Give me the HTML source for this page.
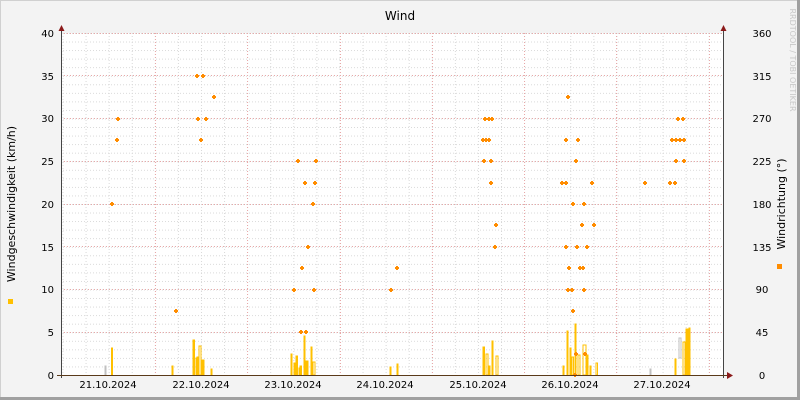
<!DOCTYPE html>
<html><head><meta charset="utf-8"><style>
html,body{margin:0;padding:0;width:800px;height:400px;overflow:hidden;background:#f3f3f3}
svg text{font-family:"DejaVu Sans","Liberation Sans",sans-serif}
</style></head><body>
<svg width="800" height="400" xmlns="http://www.w3.org/2000/svg">
<defs>
<pattern id="mh" x="0" y="33" width="800" height="8.55" patternUnits="userSpaceOnUse"><line x1="0" y1="0.5" x2="800" y2="0.5" stroke="#d8d8d8" stroke-dasharray="1,2"/></pattern>
<pattern id="mv" x="62.5" y="0" width="23.08" height="400" patternUnits="userSpaceOnUse"><line x1="0.5" y1="0" x2="0.5" y2="400" stroke="#d8d8d8" stroke-dasharray="1,2"/></pattern>
</defs>
<rect x="0" y="0" width="800" height="400" fill="#f3f3f3"/>
<line x1="0" y1="0.5" x2="800" y2="0.5" stroke="#d0d0d0"/>
<line x1="0.5" y1="0" x2="0.5" y2="400" stroke="#d0d0d0"/>
<line x1="0" y1="398.5" x2="800" y2="398.5" stroke="#a0a0a0" stroke-width="3"/>
<line x1="798.5" y1="0" x2="798.5" y2="400" stroke="#a0a0a0" stroke-width="3"/>
<rect x="61" y="33" width="662" height="342" fill="#fff"/>
<rect x="61" y="33" width="662" height="342" fill="url(#mh)"/>
<rect x="61" y="33" width="662" height="342" fill="url(#mv)"/>
<g stroke="#e8a8a8" stroke-dasharray="1,2">
<line x1="61" y1="332.5" x2="723" y2="332.5"/><line x1="61" y1="289.5" x2="723" y2="289.5"/><line x1="61" y1="246.5" x2="723" y2="246.5"/><line x1="61" y1="204.5" x2="723" y2="204.5"/><line x1="61" y1="161.5" x2="723" y2="161.5"/><line x1="61" y1="118.5" x2="723" y2="118.5"/><line x1="61" y1="75.5" x2="723" y2="75.5"/><line x1="61" y1="33.5" x2="723" y2="33.5"/>
<line x1="155.5" y1="33" x2="155.5" y2="378"/><line x1="247.5" y1="33" x2="247.5" y2="378"/><line x1="340.5" y1="33" x2="340.5" y2="378"/><line x1="432.5" y1="33" x2="432.5" y2="378"/><line x1="524.5" y1="33" x2="524.5" y2="378"/><line x1="616.5" y1="33" x2="616.5" y2="378"/><line x1="709.5" y1="33" x2="709.5" y2="378"/>
</g>
<g fill="#ffc000" stroke="#ffc000">
<rect x="105" y="366" width="1" height="9" fill="none" stroke="#c0c0c0"/><rect x="111.5" y="348" width="1" height="27"/>
<rect x="172" y="366" width="1" height="9"/>
<rect x="193" y="340" width="1.5" height="35"/><rect x="196" y="358" width="1" height="17" fill="none"/><rect x="197" y="357" width="2" height="18"/><rect x="199" y="346" width="2" height="29" fill="none"/><rect x="202" y="360" width="2" height="15"/><rect x="211" y="369" width="1" height="6"/>
<rect x="291" y="354" width="1" height="21"/><rect x="294" y="363" width="1" height="12"/><rect x="296" y="356" width="1.5" height="19"/><rect x="299" y="368" width="1" height="7" fill="none"/><rect x="300" y="366" width="1.5" height="9"/><rect x="304" y="336" width="1" height="39"/><rect x="306" y="361" width="2" height="14"/><rect x="311" y="347" width="1" height="28"/><rect x="313" y="362" width="2" height="13" fill="none"/>
<rect x="390" y="367" width="1" height="8"/><rect x="397" y="364" width="1" height="11"/>
<rect x="483" y="347" width="1.5" height="28"/><rect x="486" y="354" width="2" height="21" fill="none"/><rect x="489" y="366" width="1" height="9"/><rect x="492" y="341" width="1" height="34"/><rect x="496" y="356" width="2" height="19" fill="none"/>
<rect x="563" y="366" width="1" height="9"/><rect x="567" y="331" width="1" height="44"/><rect x="570" y="348" width="1" height="27"/><rect x="572" y="357" width="1.5" height="18" fill="none"/><rect x="575" y="324" width="1" height="51"/><rect x="578" y="355" width="2" height="20" fill="none"/><rect x="583" y="345" width="3" height="30" fill="none"/><rect x="586" y="355" width="2" height="20"/><rect x="590" y="366" width="1" height="9"/><rect x="596" y="363" width="1.5" height="12" fill="none"/>
<rect x="650" y="369" width="1" height="6" fill="none" stroke="#c0c0c0"/><rect x="675" y="359" width="1" height="16"/><rect x="679" y="338" width="2" height="20" fill="none" stroke="#c0c0c0"/><rect x="683" y="342" width="2" height="33" fill="none"/><rect x="686" y="329" width="2" height="46"/><rect x="689" y="328" width="1" height="47"/>
</g>
<path fill="#ff8c00" d="
M111,202h2v1h1v2h-1v1h-2v-1h-1v-2h1z
M116,138h2v1h1v2h-1v1h-2v-1h-1v-2h1z
M117,117h2v1h1v2h-1v1h-2v-1h-1v-2h1z
M175,309h2v1h1v2h-1v1h-2v-1h-1v-2h1z
M196,74h2v1h1v2h-1v1h-2v-1h-1v-2h1z
M202,74h2v1h1v2h-1v1h-2v-1h-1v-2h1z
M213,95h2v1h1v2h-1v1h-2v-1h-1v-2h1z
M197,117h2v1h1v2h-1v1h-2v-1h-1v-2h1z
M205,117h2v1h1v2h-1v1h-2v-1h-1v-2h1z
M200,138h2v1h1v2h-1v1h-2v-1h-1v-2h1z
M297,159h2v1h1v2h-1v1h-2v-1h-1v-2h1z
M315,159h2v1h1v2h-1v1h-2v-1h-1v-2h1z
M304,181h2v1h1v2h-1v1h-2v-1h-1v-2h1z
M314,181h2v1h1v2h-1v1h-2v-1h-1v-2h1z
M312,202h2v1h1v2h-1v1h-2v-1h-1v-2h1z
M307,245h2v1h1v2h-1v1h-2v-1h-1v-2h1z
M301,266h2v1h1v2h-1v1h-2v-1h-1v-2h1z
M293,288h2v1h1v2h-1v1h-2v-1h-1v-2h1z
M313,288h2v1h1v2h-1v1h-2v-1h-1v-2h1z
M300,330h2v1h1v2h-1v1h-2v-1h-1v-2h1z
M305,330h2v1h1v2h-1v1h-2v-1h-1v-2h1z
M396,266h2v1h1v2h-1v1h-2v-1h-1v-2h1z
M390,288h2v1h1v2h-1v1h-2v-1h-1v-2h1z
M484,117h2v1h1v2h-1v1h-2v-1h-1v-2h1z
M488,117h2v1h1v2h-1v1h-2v-1h-1v-2h1z
M491,117h2v1h1v2h-1v1h-2v-1h-1v-2h1z
M482,138h2v1h1v2h-1v1h-2v-1h-1v-2h1z
M485,138h2v1h1v2h-1v1h-2v-1h-1v-2h1z
M488,138h2v1h1v2h-1v1h-2v-1h-1v-2h1z
M483,159h2v1h1v2h-1v1h-2v-1h-1v-2h1z
M490,159h2v1h1v2h-1v1h-2v-1h-1v-2h1z
M490,181h2v1h1v2h-1v1h-2v-1h-1v-2h1z
M495,223h2v1h1v2h-1v1h-2v-1h-1v-2h1z
M494,245h2v1h1v2h-1v1h-2v-1h-1v-2h1z
M567,95h2v1h1v2h-1v1h-2v-1h-1v-2h1z
M565,138h2v1h1v2h-1v1h-2v-1h-1v-2h1z
M577,138h2v1h1v2h-1v1h-2v-1h-1v-2h1z
M575,159h2v1h1v2h-1v1h-2v-1h-1v-2h1z
M561,181h2v1h1v2h-1v1h-2v-1h-1v-2h1z
M565,181h2v1h1v2h-1v1h-2v-1h-1v-2h1z
M591,181h2v1h1v2h-1v1h-2v-1h-1v-2h1z
M572,202h2v1h1v2h-1v1h-2v-1h-1v-2h1z
M583,202h2v1h1v2h-1v1h-2v-1h-1v-2h1z
M581,223h2v1h1v2h-1v1h-2v-1h-1v-2h1z
M593,223h2v1h1v2h-1v1h-2v-1h-1v-2h1z
M565,245h2v1h1v2h-1v1h-2v-1h-1v-2h1z
M576,245h2v1h1v2h-1v1h-2v-1h-1v-2h1z
M586,245h2v1h1v2h-1v1h-2v-1h-1v-2h1z
M568,266h2v1h1v2h-1v1h-2v-1h-1v-2h1z
M579,266h2v1h1v2h-1v1h-2v-1h-1v-2h1z
M582,266h2v1h1v2h-1v1h-2v-1h-1v-2h1z
M567,288h2v1h1v2h-1v1h-2v-1h-1v-2h1z
M571,288h2v1h1v2h-1v1h-2v-1h-1v-2h1z
M583,288h2v1h1v2h-1v1h-2v-1h-1v-2h1z
M572,309h2v1h1v2h-1v1h-2v-1h-1v-2h1z
M575,352h2v1h1v2h-1v1h-2v-1h-1v-2h1z
M584,352h2v1h1v2h-1v1h-2v-1h-1v-2h1z
M574,373h2v1h1v2h-1v1h-2v-1h-1v-2h1z
M644,181h2v1h1v2h-1v1h-2v-1h-1v-2h1z
M669,181h2v1h1v2h-1v1h-2v-1h-1v-2h1z
M674,181h2v1h1v2h-1v1h-2v-1h-1v-2h1z
M677,117h2v1h1v2h-1v1h-2v-1h-1v-2h1z
M682,117h2v1h1v2h-1v1h-2v-1h-1v-2h1z
M671,138h2v1h1v2h-1v1h-2v-1h-1v-2h1z
M675,138h2v1h1v2h-1v1h-2v-1h-1v-2h1z
M679,138h2v1h1v2h-1v1h-2v-1h-1v-2h1z
M683,138h2v1h1v2h-1v1h-2v-1h-1v-2h1z
M675,159h2v1h1v2h-1v1h-2v-1h-1v-2h1z
M683,159h2v1h1v2h-1v1h-2v-1h-1v-2h1z"/>
<line x1="61.5" y1="27" x2="61.5" y2="378" stroke="#444"/>
<line x1="723.5" y1="27" x2="723.5" y2="378" stroke="#444"/>
<line x1="57" y1="375.5" x2="727" y2="375.5" stroke="#5a3a1a"/>
<polygon points="58.5,31 64.5,31 61.5,25" fill="#8b1a1a"/>
<polygon points="720.5,31 726.5,31 723.5,25" fill="#8b1a1a"/>
<polygon points="727,372 727,379 733,375.5" fill="#8b1a1a"/>
<g font-size="10" fill="#000" text-anchor="end">
<text x="54" y="379">0</text><text x="54" y="336">5</text><text x="54" y="293">10</text><text x="54" y="251">15</text><text x="54" y="208">20</text><text x="54" y="165">25</text><text x="54" y="122">30</text><text x="54" y="80">35</text><text x="54" y="37">40</text>
</g>
<g font-size="10" fill="#000" text-anchor="middle">
<text x="762" y="379">0</text><text x="762" y="336">45</text><text x="762" y="293">90</text><text x="762" y="251">135</text><text x="762" y="208">180</text><text x="762" y="165">225</text><text x="762" y="122">270</text><text x="762" y="80">315</text><text x="762" y="37">360</text>
<text x="108" y="388">21.10.2024</text><text x="201" y="388">22.10.2024</text><text x="293" y="388">23.10.2024</text><text x="385" y="388">24.10.2024</text><text x="478" y="388">25.10.2024</text><text x="570" y="388">26.10.2024</text><text x="662" y="388">27.10.2024</text>
</g>
<text x="400" y="20" font-size="12" text-anchor="middle">Wind</text>
<text transform="translate(15,204) rotate(-90)" font-size="11" text-anchor="middle">Windgeschwindigkeit (km/h)</text>
<text transform="translate(785,204) rotate(-90)" font-size="11" text-anchor="middle">Windrichtung (°)</text>
<text transform="translate(790,60) rotate(90)" font-size="8" fill="#c8c8c8" text-anchor="middle">RRDTOOL / TOBI OETIKER</text>
<rect x="8" y="299" width="5" height="5" fill="#ffc000"/>
<rect x="777" y="264" width="5" height="5" fill="#ff8c00"/>
</svg>
</body></html>
